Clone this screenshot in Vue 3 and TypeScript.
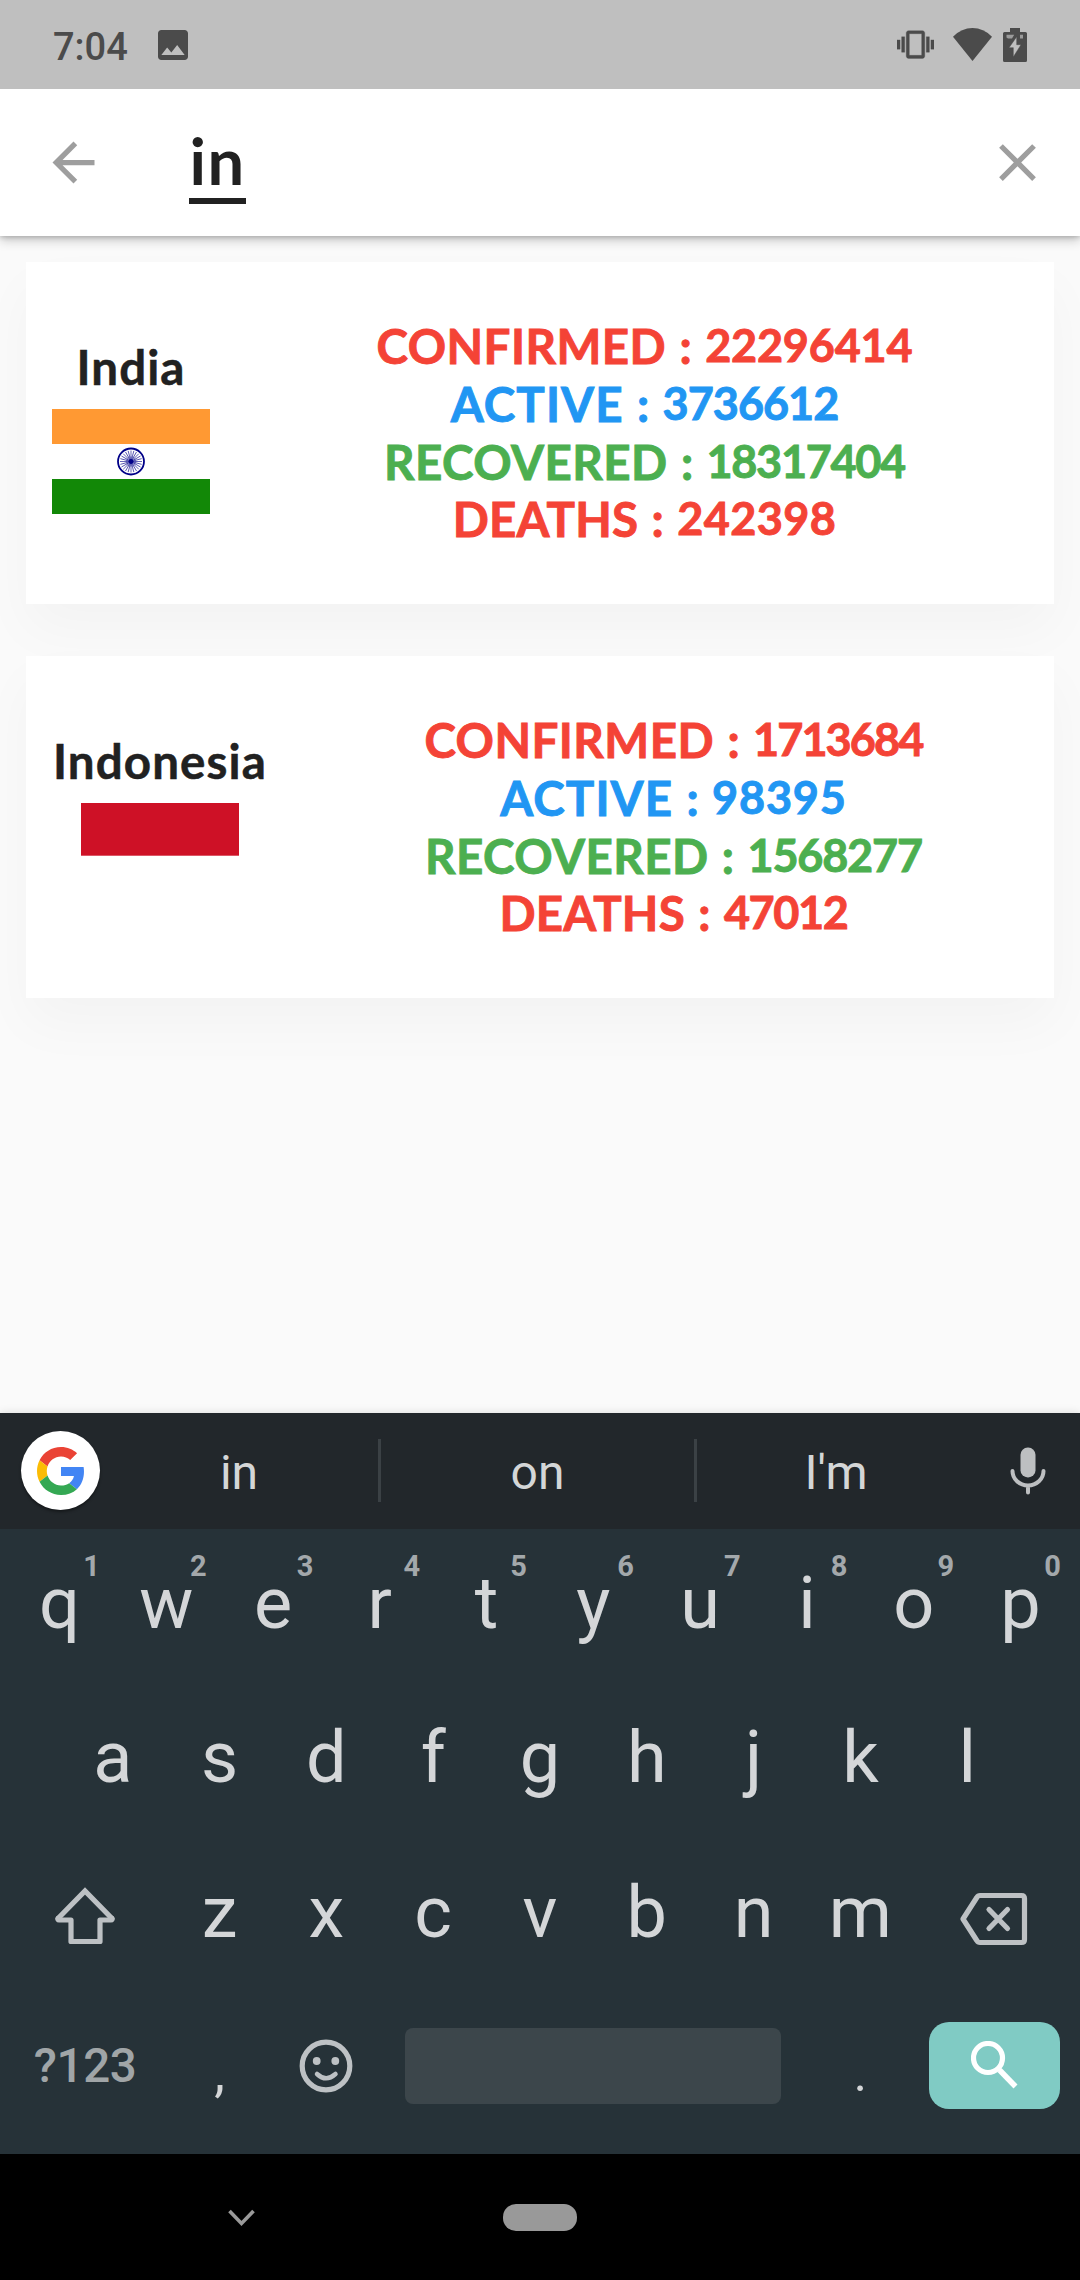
<script setup lang="ts">
interface Stat {
  label: string
  value: string
  tone: 'red' | 'blue' | 'green'
  // letter spacing in px for the label and for the number
  labelGap: number
  valueGap: number
}
interface Country {
  name: string
  flag: 'india' | 'indonesia'
  stats: Stat[]
}

const query = 'in'
const suggestions: string[] = ['in', 'on', "I'm"]
const topRow = 'qwertyuiop'.split('').map((key, i) => ({ key, hint: String((i + 1) % 10) }))
const homeRow = 'asdfghjkl'.split('')
const bottomRow = 'zxcvbnm'.split('')
const spokes = Array.from({ length: 24 }, (_, i) => i * 15)

const countries: Country[] = [
  {
    name: 'India',
    flag: 'india',
    stats: [
      { label: 'CONFIRMED', value: '22296414', tone: 'red', labelGap: 0.45, valueGap: -0.2 },
      { label: 'ACTIVE', value: '3736612', tone: 'blue', labelGap: 1.1, valueGap: -1 },
      { label: 'RECOVERED', value: '18317404', tone: 'green', labelGap: 0.45, valueGap: -1.3 },
      { label: 'DEATHS', value: '242398', tone: 'red', labelGap: 0.2, valueGap: 0.4 },
    ],
  },
  {
    name: 'Indonesia',
    flag: 'indonesia',
    stats: [
      { label: 'CONFIRMED', value: '1713684', tone: 'red', labelGap: 0.45, valueGap: -1.9 },
      { label: 'ACTIVE', value: '98395', tone: 'blue', labelGap: 1.1, valueGap: 0.8 },
      { label: 'RECOVERED', value: '1568277', tone: 'green', labelGap: 0.45, valueGap: -1.2 },
      { label: 'DEATHS', value: '47012', tone: 'red', labelGap: 0.2, valueGap: -1.4 },
    ],
  },
]
</script>

<template>
  <div class="screen">
    <header class="status">
      <span class="clock">7:04</span>
      <svg class="picture" viewBox="0 0 24 24"><path d="M21 19V5c0-1.1-.9-2-2-2H5c-1.1 0-2 .9-2 2v14c0 1.1.9 2 2 2h14c1.1 0 2-.9 2-2zM8.500 13.500l2.500 3.010L14.500 12l4.500 6H5l3.500-4.500z" /></svg>
      <svg class="vibrate" viewBox="0 0 24 24"><path d="M0 15h2V9H0v6zm3 2h2V7H3v10zm19-8v6h2V9h-2zm-3 8h2V7h-2v10zM16.500 3h-9C6.670 3 6 3.670 6 4.500v15c0 .83.67 1.500 1.500 1.500h9c.83 0 1.500-.67 1.500-1.500v-15c0-.83-.67-1.500-1.500-1.500zM16 19H8V5h8v14z" /></svg>
      <svg class="wifi" viewBox="0 0 39 33"><path d="M19.500 33 0 8.700Q8.500 0 19.500 0T39 8.700Z" /></svg>
      <svg class="battery" viewBox="0 0 24 34">
        <path d="M7 0h10v4h5.500A1.500 1.500 0 0 1 24 5.500v27a1.500 1.500 0 0 1-1.500 1.500h-21A1.500 1.500 0 0 1 0 32.500v-27A1.500 1.500 0 0 1 1.500 4H7Z" />
        <path class="level" d="M3.500 6.700h7.700L9 10.600H5L3.500 9.500ZM17 6.700h3v3.900h-3Z" />
        <path class="bolt" d="M13.700 8.700 6 19.700h4.300V29L18 16.700h-4.300Z" />
      </svg>
    </header>

    <div class="searchbar">
      <svg class="back" viewBox="0 0 24 24"><path d="M20 11H7.830l5.590-5.590L12 4l-8 8 8 8 1.410-1.410L7.830 13H20v-2z" /></svg>
      <div class="field"><span class="query">{{ query }}</span></div>
      <svg class="clear" viewBox="0 0 24 24"><path d="M19 6.410 17.590 5 12 10.590 6.410 5 5 6.410 10.590 12 5 17.590 6.410 19 12 13.410 17.590 19 19 17.590 13.410 12z" /></svg>
    </div>

    <main class="results">
      <article v-for="c in countries" :key="c.name" class="card">
        <div class="country">
          <div class="name">{{ c.name }}</div>
          <svg v-if="c.flag === 'india'" class="flag" viewBox="0 0 158 105">
            <rect width="158" height="35" fill="#ff9933" />
            <rect y="35" width="158" height="35" fill="#fff" />
            <rect y="70" width="158" height="35" fill="#128807" />
            <g stroke="#000088" fill="none">
              <circle cx="79" cy="52.500" r="13" stroke-width="1.800" />
              <line v-for="a in spokes" :key="a" x1="79" y1="52.500" x2="79" y2="41.500" stroke-width=".6" :transform="`rotate(${a} 79 52.5)`" />
              <circle cx="79" cy="52.500" r="4.500" stroke-width="1.500" stroke-opacity=".2" />
              <circle cx="79" cy="52.500" r="2.400" fill="#000088" stroke="none" />
            </g>
          </svg>
          <svg v-else class="flag" viewBox="0 0 158 105">
            <rect width="158" height="105" fill="#fff" />
            <rect width="158" height="52.700" fill="#ce1126" />
          </svg>
        </div>
        <div class="stats">
          <div v-for="s in c.stats" :key="s.label" class="stat" :class="s.tone">
            <span :style="{ letterSpacing: s.labelGap + 'px' }">{{ s.label }}</span><span class="colon">:</span><span class="num" :style="{ letterSpacing: s.valueGap + 'px' }">{{ s.value }}</span>
          </div>
        </div>
      </article>
    </main>

    <section class="keyboard">
      <div class="suggest">
        <div class="google">
          <svg viewBox="0 0 48 48">
            <path fill="#EA4335" d="M24 9.500c3.540 0 6.710 1.220 9.210 3.600l6.850-6.850C35.900 2.380 30.470 0 24 0 14.620 0 6.510 5.380 2.560 13.220l7.980 6.190C12.430 13.720 17.740 9.500 24 9.500z" />
            <path fill="#4285F4" d="M46.980 24.550c0-1.570-.15-3.090-.38-4.550H24v9.020h12.940c-.58 2.960-2.260 5.480-4.780 7.180l7.730 6c4.510-4.180 7.090-10.360 7.090-17.650z" />
            <path fill="#FBBC05" d="M10.530 28.590c-.48-1.450-.76-2.990-.76-4.590s.27-3.140.76-4.590l-7.980-6.190C.92 16.460 0 20.120 0 24c0 3.880.92 7.540 2.560 10.780l7.970-6.190z" />
            <path fill="#34A853" d="M24 48c6.480 0 11.930-2.130 15.890-5.810l-7.730-6c-2.150 1.450-4.920 2.300-8.160 2.300-6.260 0-11.570-4.220-13.470-9.910l-7.980 6.190C6.510 42.620 14.620 48 24 48z" />
          </svg>
        </div>
        <div class="words">
          <div v-for="w in suggestions" :key="w" class="word">{{ w }}</div>
        </div>
        <svg class="mic" viewBox="0 0 36 48">
          <rect x="10.500" y=".5" width="15" height="30" rx="7.300" fill="#bdbfc1" />
          <path d="M2.500 24a15.500 14.500 0 0 0 31 0M18 39v6.500" fill="none" stroke="#bdbfc1" stroke-width="4" stroke-linecap="round" />
        </svg>
      </div>

      <div class="keys">
        <div class="row">
          <div v-for="k in topRow" :key="k.key" class="key">{{ k.key }}<span class="hint">{{ k.hint }}</span></div>
        </div>
        <div class="row">
          <div v-for="k in homeRow" :key="k" class="key">{{ k }}</div>
        </div>
        <div class="row">
          <div class="key wide">
            <svg width="160" height="149" viewBox="0 0 160 149" class="line">
              <path d="M52 80.500 79 53l27 27.500" stroke-linejoin="miter" />
              <path d="M52 80.500q-.5 1.500 1 1.500h12v21.500h29V82h11q1.500 0 1-1.500" />
            </svg>
          </div>
          <div v-for="k in bottomRow" :key="k" class="key">{{ k }}</div>
          <div class="key wide">
            <svg width="160" height="149" viewBox="0 0 160 149" class="line">
              <path d="M66 57.500h41.500q3 0 3 3v41q0 3-3 3H66q-2 0-3.200-2L49 81l13.800-21.500q1.200-2 3.200-2Z" />
              <path d="m75 71.500 18.500 19M93.500 71.500 75 90.500" />
            </svg>
          </div>
        </div>
        <div class="row">
          <div class="key wide symbols">?123</div>
          <div class="key comma">,</div>
          <div class="key">
            <svg width="54" height="54" viewBox="0 0 54 54" class="line">
              <circle cx="27" cy="27" r="23.800" stroke-width="5.200" />
              <path d="M18 35q9 8.500 18.500 0" stroke-width="4.500" />
              <circle cx="17.700" cy="22" r="3.900" fill="#bdc1c4" stroke="none" />
              <circle cx="36.300" cy="22" r="3.900" fill="#bdc1c4" stroke="none" />
            </svg>
          </div>
          <div class="key space"><div class="spacebar"></div></div>
          <div class="key dot">.</div>
          <div class="key wide">
            <div class="enter">
              <svg width="48" height="48" viewBox="0 0 48 48">
                <circle cx="17" cy="17" r="14.500" fill="none" stroke="#fff" stroke-width="5.200" />
                <path d="M28.500 29 44.500 45.500" stroke="#fff" stroke-width="5.500" />
                <path d="M26 26l4 4" stroke="#fff" stroke-width="3" />
              </svg>
            </div>
          </div>
        </div>
      </div>
    </section>

    <nav class="navbar">
      <svg class="chevron" viewBox="0 0 27 18"><path d="m1.500 2 12 12.500 12-12.500" fill="none" stroke="#9a9a9a" stroke-width="3.600" /></svg>
      <div class="pill"></div>
    </nav>
  </div>
</template>

<style>
body {
  background: #fafafa;
}
</style>

<style scoped>
.screen {
  width: 1080px;
  height: 2280px;
  display: flex;
  flex-direction: column;
  background: #fafafa;
  overflow: hidden;
  font-family: Roboto, sans-serif;
}
svg {
  display: block;
  flex: none;
}
.status {
  position: relative;
  z-index: 2;
  height: 89px;
  flex: none;
  box-sizing: border-box;
  padding: 0 53px;
  display: flex;
  align-items: center;
  background: #bfbfbf;
  color: #4b4b4b;
  fill: #4b4b4b;
}
.clock {
  width: 100px;
  font-size: 38px;
  font-weight: 500;
  line-height: 44px;
  padding-top: 4px;
}
.picture {
  width: 40px;
  height: 40px;
}
.vibrate {
  width: 37px;
  height: 37px;
  margin-left: auto;
  stroke: #4b4b4b;
  stroke-width: 0.2;
}
.wifi {
  width: 39px;
  height: 33px;
  margin-left: 19px;
}
.battery {
  width: 24px;
  height: 34px;
  margin: 0 0 0 11px;
}
.level {
  fill: #9b9b9b;
}
.bolt {
  fill: #bfbfbf;
  stroke: #4b4b4b;
  stroke-width: 0.5;
}
.searchbar {
  position: relative;
  z-index: 1;
  height: 147px;
  flex: none;
  box-sizing: border-box;
  padding: 0 31px 0 42px;
  display: flex;
  align-items: center;
  background: #fff;
  box-shadow: 0 5px 10px rgba(0, 0, 0, 0.18), 0 1px 5px rgba(0, 0, 0, 0.22);
  fill: #9e9e9e;
}
.back,
.clear {
  width: 63px;
  height: 63px;
}
.field {
  flex: 1;
  padding-left: 84px;
  display: flex;
}
.query {
  height: 78px;
  width: 57px;
  box-sizing: border-box;
  margin-top: 4px;
  border-bottom: 6px solid #212121;
  font-family: Lato, sans-serif;
  font-weight: 700;
  font-size: 65px;
  line-height: 68px;
  letter-spacing: 1.5px;
  text-align: center;
  white-space: nowrap;
  color: #212121;
}
.results {
  flex: 1;
  padding: 26px;
  display: flex;
  flex-direction: column;
  gap: 52.5px;
}
.card {
  height: 341.5px;
  flex: none;
  box-sizing: border-box;
  padding-left: 26px;
  display: flex;
  align-items: center;
  background: #fff;
  box-shadow: 0 26px 52px rgba(0, 0, 0, 0.03);
  font-family: Lato, sans-serif;
  font-weight: 700;
  font-size: 47.5px;
  line-height: 57.7px;
}
.country {
  display: flex;
  flex-direction: column;
  align-items: center;
  color: #212121;
}
.name {
  padding: 0 1px;
  letter-spacing: 1.1px;
  -webkit-text-stroke: 0.5px currentColor;
}
.flag {
  width: 158px;
  height: 105px;
  margin: 13px 0;
}
.stats {
  flex: 1;
  margin-left: 25px;
  -webkit-text-stroke: 0.9px currentColor;
}
.stat {
  display: flex;
  justify-content: center;
}
.colon {
  width: 39px;
  text-align: center;
}
.num {
  font-size: 45px;
}
.red {
  color: #f44336;
}
.blue {
  color: #2196f3;
}
.green {
  color: #4caf50;
}
.keyboard {
  position: relative;
  height: 741px;
  flex: none;
  background: #263238;
  box-shadow: 0 0 9px rgba(0, 0, 0, 0.12);
}
.suggest {
  height: 116px;
  box-sizing: border-box;
  padding-bottom: 1px;
  display: flex;
  align-items: center;
  background: #22272b;
}
.google {
  width: 79px;
  height: 79px;
  margin-left: 21px;
  border-radius: 50%;
  background: #fff;
  display: flex;
  align-items: center;
  justify-content: center;
  box-shadow: 0 2px 3px rgba(0, 0, 0, 0.4);
}
.google svg {
  width: 48px;
  height: 48px;
}
.words {
  flex: 1;
  display: flex;
}
.word {
  width: 278px;
  height: 63px;
  box-sizing: border-box;
  font-size: 48px;
  line-height: 68px;
  text-align: center;
  color: #d4d6d7;
}
.word:nth-child(2) {
  width: 319px;
  border: solid #3b4145;
  border-width: 0 3px;
}
.mic {
  width: 36px;
  height: 48px;
  margin-right: 34px;
}
.keys {
  padding: 0 6px;
}
.row {
  height: 154.3px;
  display: flex;
  justify-content: center;
}
.key {
  position: relative;
  width: 106.8px;
  height: 149px;
  flex: none;
  display: flex;
  align-items: center;
  justify-content: center;
  font-size: 72px;
  line-height: 149px;
  color: #d4d6d8;
}
.hint {
  position: absolute;
  top: 20px;
  right: 13px;
  font-size: 29px;
  font-weight: 700;
  line-height: 34px;
  color: #a3a8ab;
}
.wide {
  width: 160.2px;
}
.line {
  fill: none;
  stroke: #bdc1c4;
  stroke-width: 5.2;
  stroke-linejoin: round;
  stroke-linecap: round;
}
.symbols {
  font-size: 47.5px;
  font-weight: 500;
  line-height: 151px;
  letter-spacing: -0.3px;
  text-indent: -2px;
  color: #a0a5a7;
}
.comma {
  font-size: 54px;
  transform: translateY(6px);
}
.dot {
  font-size: 50px;
  transform: translateY(8px);
}
.space {
  width: 427.2px;
}
.spacebar {
  width: 376px;
  height: 76px;
  border-radius: 8px;
  background: #3c464b;
}
.enter {
  width: 131px;
  height: 87px;
  margin: 0 0 2px 2px;
  border-radius: 20px;
  background: #80cbc4;
  display: flex;
  align-items: center;
  justify-content: center;
}
.navbar {
  height: 126px;
  flex: none;
  display: flex;
  align-items: center;
  background: #000;
}
.chevron {
  width: 27px;
  height: 18px;
  margin-left: 227.5px;
  margin-top: 1px;
}
.pill {
  width: 74px;
  height: 27px;
  margin-left: 248.5px;
  border-radius: 13px;
  background: #999;
}
</style>
